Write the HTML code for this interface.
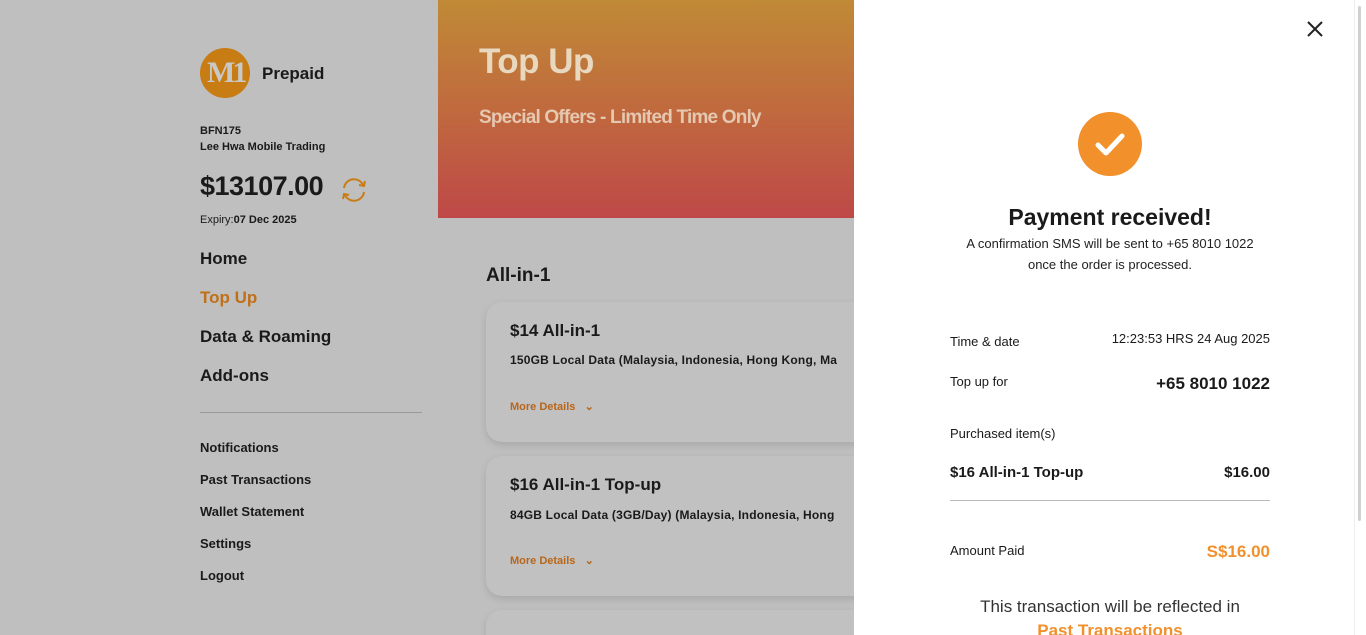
<!DOCTYPE html>
<html style="width:1366px;height:635px;overflow:hidden"><head><meta charset="utf-8"><style>
*{margin:0;padding:0;box-sizing:border-box}
body{width:1366px;height:635px;overflow:hidden;background:#bfbfbf;font-family:"Liberation Sans",sans-serif;color:#1a1a1a;position:relative}
.abs{position:absolute}
.b{font-weight:bold}
.banner{left:438px;top:0;width:430px;height:218px;background:linear-gradient(180deg,#c08a36 0%,#c06a3e 50%,#be4848 100%)}
.card{left:486px;width:400px;height:140px;background:#c1c1c1;border-radius:16px;box-shadow:0 3px 8px rgba(0,0,0,.12)}
.panel{left:854px;top:0;width:500px;height:635px;background:#fff}
.sb{left:1354px;top:0;width:12px;height:635px;background:#fff;border-left:1px solid #eee}
.sb i{position:absolute;left:3px;top:6px;width:3px;height:515px;background:#d0d0d0;border-radius:2px}
.md{color:#b8661a;font-size:11px;font-weight:bold}
</style></head><body>
<div class="abs banner"></div>
<div class="abs b" style="left:479px;top:42px;font-size:35px;color:#e8d8c0;letter-spacing:-0.5px">Top Up</div>
<div class="abs b" style="left:479px;top:107px;font-size:19px;color:#e5c8b0;letter-spacing:-0.8px">Special Offers - Limited Time Only</div>

<div class="abs" style="left:200px;top:48px;width:50px;height:50px;border-radius:50%;background:#c87c14"></div>
<div class="abs b" style="left:207px;top:56px;font-size:30px;color:#c8c8c8;font-family:'Liberation Serif',serif;letter-spacing:-3px">M1</div>
<div class="abs b" style="left:262px;top:64px;font-size:17px">Prepaid</div>
<div class="abs b" style="left:200px;top:123px;font-size:11px;line-height:16px">BFN175<br>Lee Hwa Mobile Trading</div>
<div class="abs b" style="left:200px;top:171px;font-size:27px;letter-spacing:-0.5px">$13107.00</div>
<svg class="abs" style="left:339px;top:176px" width="30" height="28" viewBox="0 0 30 28" fill="none" stroke="#c87c14" stroke-width="2"><path d="M5 12 A10 10 0 0 1 24 9"/><path d="M25 16 A10 10 0 0 1 6 19"/><path d="M20 9 L25 10 L26 5" /><path d="M10 19 L5 18 L4 23"/></svg>
<div class="abs" style="left:200px;top:214px;font-size:11px">Expiry:<b>07 Dec 2025</b></div>
<div class="abs b" style="left:200px;top:239px;font-size:17px;line-height:39px">Home<br><span style="color:#c07018">Top Up</span><br>Data &amp; Roaming<br>Add-ons</div>
<div class="abs" style="left:200px;top:412px;width:222px;height:1px;background:#999"></div>
<div class="abs b" style="left:200px;top:432px;font-size:13px;line-height:32px">Notifications<br>Past Transactions<br>Wallet Statement<br>Settings<br>Logout</div>

<div class="abs b" style="left:486px;top:265px;font-size:19px">All-in-1</div>
<div class="abs card" style="top:302px"></div>
<div class="abs b" style="left:510px;top:321px;font-size:17px">$14 All-in-1</div>
<div class="abs b" style="left:510px;top:353px;font-size:12px;white-space:nowrap;letter-spacing:0.2px">150GB Local Data (Malaysia, Indonesia, Hong Kong, Ma</div>
<div class="abs md" style="left:510px;top:400px">More Details &nbsp;&nbsp;⌄</div>
<div class="abs card" style="top:456px"></div>
<div class="abs b" style="left:510px;top:475px;font-size:17px">$16 All-in-1 Top-up</div>
<div class="abs b" style="left:510px;top:508px;font-size:12px;white-space:nowrap;letter-spacing:0.2px">84GB Local Data (3GB/Day) (Malaysia, Indonesia, Hong</div>
<div class="abs md" style="left:510px;top:554px">More Details &nbsp;&nbsp;⌄</div>
<div class="abs card" style="top:610px;height:25px;border-bottom-left-radius:0;border-bottom-right-radius:0"></div>

<div class="abs panel"></div>
<div class="abs sb"><i></i></div>
<svg class="abs" style="left:1306px;top:20px" width="18" height="18" viewBox="0 0 18 18" stroke="#222" stroke-width="2"><path d="M2 2L16 16M16 2L2 16"/></svg>
<div class="abs" style="left:1078px;top:112px;width:64px;height:64px;border-radius:50%;background:#f2902c"></div>
<svg class="abs" style="left:1078px;top:112px" width="64" height="64" viewBox="0 0 64 64" fill="none" stroke="#fff" stroke-width="5" stroke-linecap="round" stroke-linejoin="round"><path d="M20 33l8 8 16-17"/></svg>
<div class="abs b" style="left:854px;width:512px;top:204px;text-align:center;font-size:23px">Payment received!</div>
<div class="abs" style="left:854px;width:512px;top:233px;text-align:center;font-size:13px;line-height:21px;color:#222">A confirmation SMS will be sent to +65 8010 1022<br>once the order is processed.</div>
<div class="abs" style="left:950px;top:334px;font-size:13px">Time &amp; date</div>
<div class="abs" style="right:96px;top:331px;font-size:13px">12:23:53 HRS 24 Aug 2025</div>
<div class="abs" style="left:950px;top:374px;font-size:13px">Top up for</div>
<div class="abs b" style="right:96px;top:374px;font-size:17px">+65 8010 1022</div>
<div class="abs" style="left:950px;top:426px;font-size:13px">Purchased item(s)</div>
<div class="abs b" style="left:950px;top:464px;font-size:15px">$16 All-in-1 Top-up</div>
<div class="abs b" style="right:96px;top:464px;font-size:15px">$16.00</div>
<div class="abs" style="left:950px;top:500px;width:320px;height:1px;background:#bbb"></div>
<div class="abs" style="left:950px;top:543px;font-size:13px">Amount Paid</div>
<div class="abs b" style="right:96px;top:542px;font-size:17px;color:#f2902c">S$16.00</div>
<div class="abs" style="left:854px;width:512px;top:597px;text-align:center;font-size:17px;color:#333">This transaction will be reflected in</div>
<div class="abs b" style="left:854px;width:512px;top:621px;text-align:center;font-size:17px;color:#f2902c;height:14px;overflow:hidden">Past Transactions</div>
</body></html>
